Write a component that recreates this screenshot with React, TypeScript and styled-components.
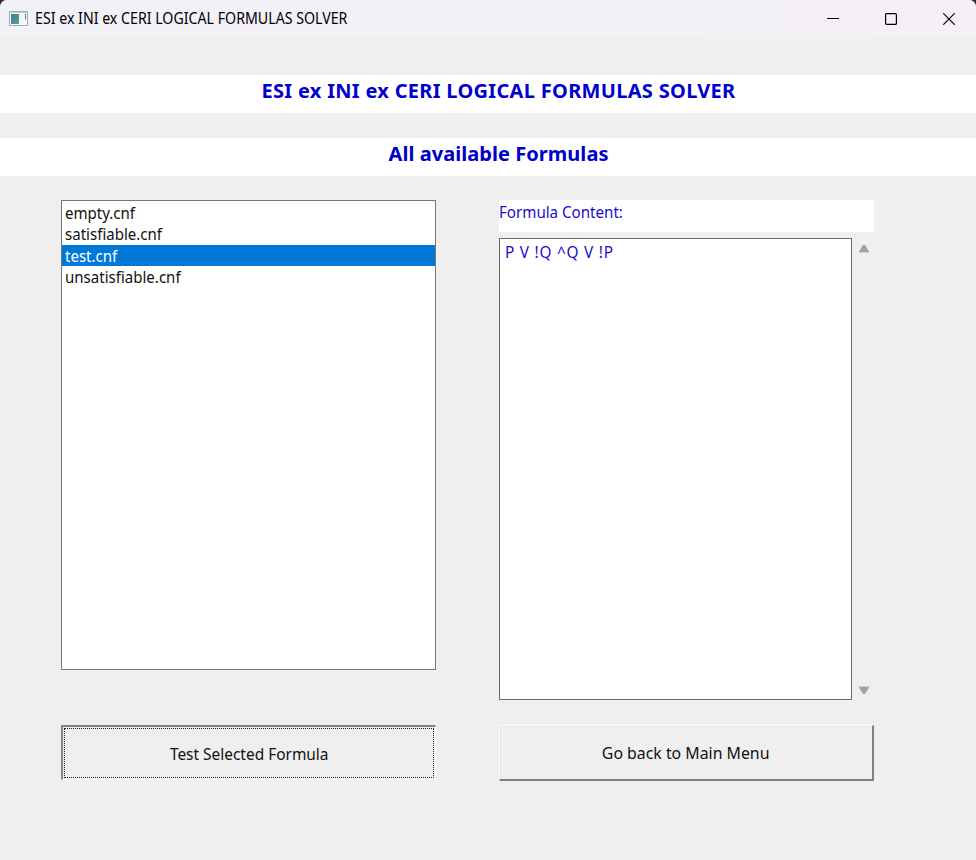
import React, { useState } from 'react';
import styled, { createGlobalStyle, css } from 'styled-components';

const GlobalStyle = createGlobalStyle`
  * { box-sizing: border-box; }
  html, body { margin: 0; padding: 0; background: #2d2a2b; }
  body { font-family: "Noto Sans", "Open Sans", sans-serif; overflow: hidden; }
  button { font: inherit; color: inherit; }
`;

const Window = styled.div`
  width: 976px;
  height: 860px;
  background: #efefef;
  border-radius: 7px 7px 0 0;
  overflow: hidden;
  display: flex;
  flex-direction: column;
`;

const TitleBar = styled.header`
  flex: none;
  height: 38px;
  display: flex;
  align-items: center;
  padding: 0 10px 0 9px;
  background: linear-gradient(90deg, #f3f1f8 0%, #f3f0f8 70%, #f6eff7 100%);
`;

const AppTitle = styled.span`
  flex: 1;
  margin: -3px 0 0 7px;
  color: #000;
`;

const Text = styled.span<{ $size: number; $spacing?: number; $condense?: number; $bold?: boolean; $centered?: boolean }>`
  display: inline-block;
  white-space: pre;
  font-size: ${p => p.$size}px;
  letter-spacing: ${p => p.$spacing ?? 0}px;
  font-weight: ${p => (p.$bold ? 700 : 400)};
  transform: scaleX(${p => p.$condense ?? 1});
  transform-origin: ${p => (p.$centered ? 'center' : 'left')};
`;

const WindowControls = styled.div`
  display: flex;
  gap: 24px;
`;

const ControlButton = styled.button`
  width: 34px;
  height: 34px;
  padding: 0;
  border: 0;
  background: transparent;
  display: flex;
  align-items: center;
  justify-content: center;
`;

const Banner = styled.h1<{ $top: number }>`
  flex: none;
  height: 38px;
  margin: ${p => p.$top}px 0 0;
  padding-left: 21px;
  background: #fff;
  color: #0000cd;
  font-size: 20px;
  line-height: 31px;
  text-align: center;
`;

const Content = styled.main`
  flex: none;
  margin: 24px 0 0 61px;
  display: grid;
  grid-template-columns: 376px 375px;
  column-gap: 62px;
  grid-template-rows: 500px 57px;
  row-gap: 25px;
`;

const FileList = styled.ul`
  list-style: none;
  width: 375px;
  height: 470px;
  margin: 0;
  padding: 1px 0 0;
  background: #fff;
  border: 1px solid #777;
`;

const FileRow = styled.li<{ $selected: boolean }>`
  height: 21.3px;
  padding-left: 3px;
  line-height: 22px;
  color: ${p => (p.$selected ? '#fff' : '#111')};
  background: ${p => (p.$selected ? '#0078d7' : 'transparent')};
`;

const Preview = styled.section`
  display: flex;
  flex-direction: column;
`;

const PreviewLabel = styled.div`
  height: 32px;
  margin-bottom: 6px;
  background: #fff;
  color: #1a0bcd;
  line-height: 24px;
`;

const PreviewBody = styled.div`
  display: flex;
  height: 462px;
`;

const FormulaBox = styled.div`
  width: 354px;
  padding: 1px 5px;
  border: 1px solid #6b6b6b;
  background: #fff;
  color: #1a0bcd;
  line-height: 24px;
`;

const ScrollTrack = styled.div`
  width: 22px;
  padding: 6px 0 5px 1px;
  display: flex;
  flex-direction: column;
  align-items: center;
  justify-content: space-between;
`;

const raised = css`
  height: 56px;
  border-color: #fcfcfc #818181 #818181 #fcfcfc;
  box-shadow: inset 1px 1px #e6e6e6;
`;

const sunken = css`
  height: 55px;
  padding: 1px;
  border-color: #838383 #f8f8f8 #f8f8f8 #838383;
`;

const ActionButton = styled.button<{ $focused?: boolean }>`
  width: 375px;
  padding: 0;
  border-style: solid;
  border-width: ${p => (p.$focused ? '2px 1px 1px 2px' : '1px 2px 2px 1px')};
  background: #efefef;
  color: #111;
  display: flex;
  ${p => (p.$focused ? sunken : raised)}
`;

const ButtonFace = styled.span<{ $focused?: boolean }>`
  flex: 1;
  align-self: stretch;
  display: flex;
  align-items: center;
  justify-content: center;
  padding-top: ${p => (p.$focused ? 2 : 0)}px;
  border: 1px dotted ${p => (p.$focused ? '#222' : 'transparent')};
`;

const files = ['empty.cnf', 'satisfiable.cnf', 'test.cnf', 'unsatisfiable.cnf'];

function AppIcon() {
  return (
    <svg width="19" height="16" viewBox="0 0 19 16">
      <defs>
        <linearGradient id="pane" x1="0" y1="0" x2="1" y2="1">
          <stop offset="0" stopColor="#4679a4" />
          <stop offset="1" stopColor="#55a580" />
        </linearGradient>
      </defs>
      <rect x="0.5" y="0.5" width="18" height="14" fill="#f9fafb" stroke="#a8adb1" />
      <path d="M1 1.5H18" stroke="#c5cacc" />
      <rect x="2" y="3" width="8" height="10" fill="url(#pane)" />
      <rect x="11" y="3" width="3" height="10" fill="#eef3f5" />
      <path d="M16.5 3V8.5" stroke="#5a9a94" strokeWidth="1.3" />
    </svg>
  );
}

function Arrow({ down }: { down?: boolean }) {
  return (
    <svg width="12" height="9" viewBox="0 0 12 9">
      <path
        d={down ? 'M1.2 1H10.8L7.3 7.2Q6 8.4 4.7 7.2Z' : 'M1.2 8H10.8L7.3 1.8Q6 .6 4.7 1.8Z'}
        fill="#a3a3a3"
        stroke="#a3a3a3"
        strokeWidth="0.8"
        strokeLinejoin="round"
      />
    </svg>
  );
}

export default function App() {
  const [selected, setSelected] = useState('test.cnf');

  return (
    <>
      <GlobalStyle />
      <Window>
        <TitleBar>
          <AppIcon />
          <AppTitle>
            <Text $size={15.5} $condense={0.915}>ESI ex INI ex CERI LOGICAL FORMULAS SOLVER</Text>
          </AppTitle>
          <WindowControls>
            <ControlButton aria-label="Minimize">
              <svg width="12" height="12" viewBox="0 0 12 12"><path d="M0 5.5H12" stroke="#000" /></svg>
            </ControlButton>
            <ControlButton aria-label="Maximize">
              <svg width="12" height="12" viewBox="0 0 12 12">
                <rect x="0.6" y="0.6" width="10.8" height="10.8" rx="1" fill="none" stroke="#000" strokeWidth="1.2" />
              </svg>
            </ControlButton>
            <ControlButton aria-label="Close">
              <svg width="12" height="12" viewBox="0 0 12 12">
                <path d="M0.3 0.3L11.7 11.7M11.7 0.3L0.3 11.7" stroke="#000" strokeWidth="1.15" />
              </svg>
            </ControlButton>
          </WindowControls>
        </TitleBar>

        <Banner $top={37}>
          <Text $size={20} $spacing={0.31} $bold>ESI ex INI ex CERI LOGICAL FORMULAS SOLVER</Text>
        </Banner>
        <Banner $top={25} as="h2">
          <Text $size={20} $spacing={0.05} $bold>All available Formulas</Text>
        </Banner>

        <Content>
          <FileList>
            {files.map(name => (
              <FileRow key={name} $selected={name === selected} onClick={() => setSelected(name)}>
                <Text $size={16} $condense={0.94}>{name}</Text>
              </FileRow>
            ))}
          </FileList>
          <Preview>
            <PreviewLabel><Text $size={16} $condense={0.945}>Formula Content:</Text></PreviewLabel>
            <PreviewBody>
              <FormulaBox><Text $size={16} $spacing={0.8} $condense={0.96}>P V !Q ^Q V !P</Text></FormulaBox>
              <ScrollTrack><Arrow /><Arrow down /></ScrollTrack>
            </PreviewBody>
          </Preview>
          <ActionButton $focused>
            <ButtonFace $focused><Text $size={16} $condense={0.965} $centered>Test Selected Formula</Text></ButtonFace>
          </ActionButton>
          <ActionButton>
            <ButtonFace><Text $size={16} $condense={0.99} $centered>Go back to Main Menu</Text></ButtonFace>
          </ActionButton>
        </Content>
      </Window>
    </>
  );
}
